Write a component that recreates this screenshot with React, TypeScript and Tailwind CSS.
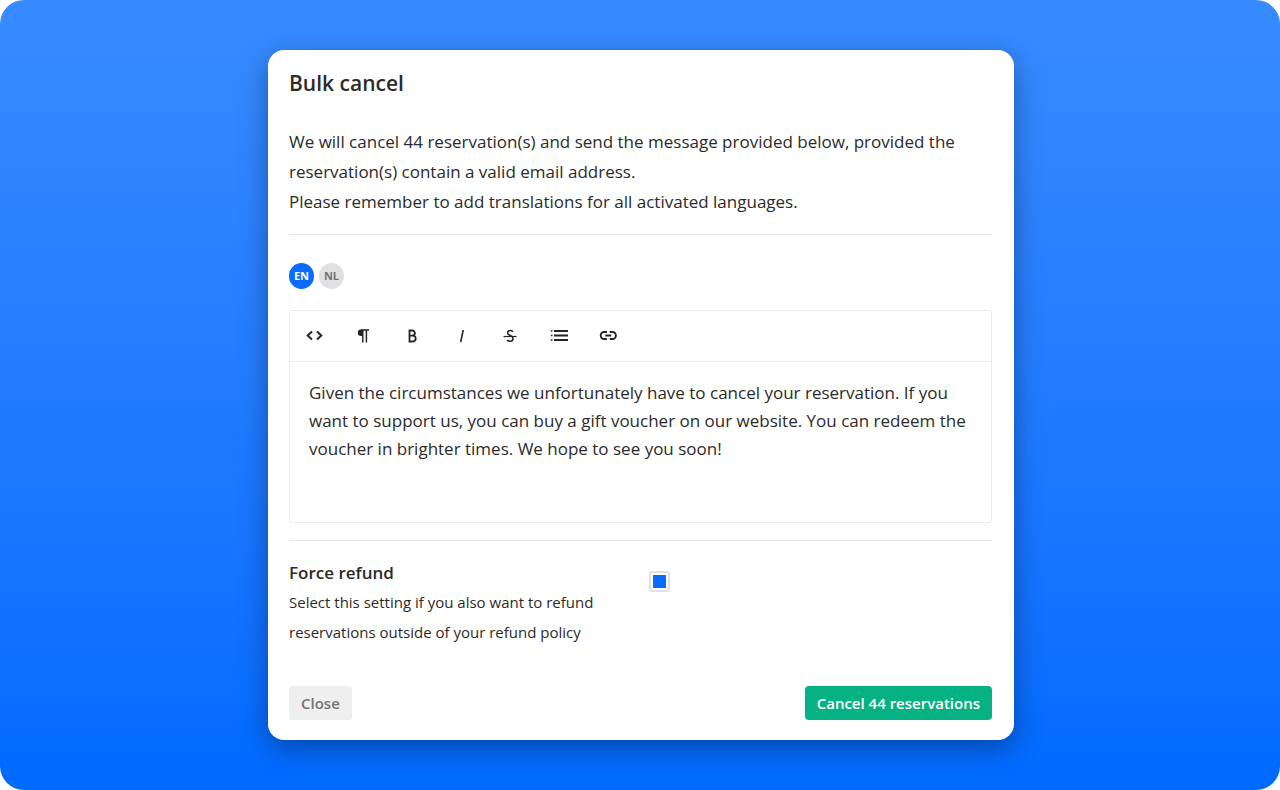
import { useState, type ReactNode } from "react";

const languages = ["EN", "NL"];

const messages: Record<string, string> = {
  EN: "Given the circumstances we unfortunately have to cancel your reservation. If you want to support us, you can buy a gift voucher on our website. You can redeem the voucher in brighter times. We hope to see you soon!",
  NL: "",
};

const tools: { label: string; icon: ReactNode }[] = [
  {
    label: "HTML",
    icon: <path d="M8 6.5 3.7 10.500 8 14.500M13 6.500l4.300 4-4.300 4" strokeWidth="2" />,
  },
  {
    label: "Format",
    icon: (
      <>
        <path
          d="M9.5 4.500H8a3.200 3.200 0 0 0 0 6.400h1.500z"
          fill="currentColor"
          stroke="none"
        />
        <path d="M8 5h8M9.800 4.500v13M13.400 4.500v13" strokeWidth="1.5" />
      </>
    ),
  },
  {
    label: "Bold",
    icon: (
      <path
        d="M7.5 5.500v11h3.300a2.900 2.900 0 0 0 0-5.800H7.500h2.800a2.600 2.600 0 0 0 0-5.200z"
        strokeWidth="1.8"
      />
    ),
  },
  { label: "Italic", icon: <path d="M12.2 5 9.700 17" strokeWidth="1.6" /> },
  {
    label: "Strikethrough",
    icon: (
      <>
        <path
          d="M13 6.700C12.300 5.900 11.400 5.500 10.200 5.500 8.600 5.500 7.600 6.400 7.600 7.800c0 3.400 5.400 2.200 5.400 5.700 0 1.700-1.200 2.800-2.900 2.800-1.300 0-2.300-.5-3-1.400"
          strokeWidth="1.6"
        />
        <path d="M3.5 11.500h13" strokeWidth="1.2" />
      </>
    ),
  },
  {
    label: "List",
    icon: (
      <>
        <path d="M5 6h14M5 10.500h14M5 15h14" strokeWidth="2" />
        <path d="M1.800 6h1.700M1.800 10.500h1.700M1.800 15h1.700" strokeWidth="1.6" />
      </>
    ),
  },
  {
    label: "Link",
    icon: (
      <path
        d="M8.900 7H6.200a3.500 3.500 0 0 0 0 7h2.700M11.700 7h2.700a3.500 3.500 0 0 1 0 7h-2.700M7.300 10.500h6"
        strokeWidth="1.9"
      />
    ),
  },
];

function EditorToolbar() {
  return (
    <div className="flex h-[51px] items-center border-b border-[#ebebeb]">
      {tools.map((tool) => (
        <button
          key={tool.label}
          type="button"
          aria-label={tool.label}
          className="flex h-full w-[49px] items-center justify-center pr-0.5 pb-0.5 text-[#252525]"
        >
          <svg
            width="20"
            height="20"
            viewBox="0 0 20 20"
            fill="none"
            stroke="currentColor"
          >
            {tool.icon}
          </svg>
        </button>
      ))}
    </div>
  );
}

export default function App() {
  const [language, setLanguage] = useState("EN");
  const [drafts, setDrafts] = useState(messages);
  const [forceRefund, setForceRefund] = useState(true);

  return (
    <main className="min-h-screen rounded-3xl bg-linear-to-b from-[#388bff] to-[#006aff] py-[50px] pr-4 pl-[18px] font-['Open_Sans',sans-serif] text-[#2b2b2b]">
      <section
        role="dialog"
        aria-labelledby="dialog-title"
        className="mx-auto max-w-[746px] rounded-2xl bg-white pt-[15px] pr-[22px] pb-5 pl-[21px] shadow-[0_8px_28px_rgba(0,0,0,0.35)]"
      >
        <h1 id="dialog-title" className="text-[21px] leading-9 font-semibold">
          Bulk cancel
        </h1>

        <div className="mt-[26px] border-b border-[#e6e6e6] pb-[17px] text-[17px] leading-[30px]">
          <p>
            We will cancel 44 reservation(s) and send the message provided
            below, provided the reservation(s) contain a valid email address.
          </p>
          <p>Please remember to add translations for all activated languages.</p>
        </div>

        <div className="mt-7 flex gap-[5px]">
          {languages.map((code) => (
            <button
              key={code}
              type="button"
              aria-pressed={language === code}
              onClick={() => setLanguage(code)}
              className={`flex h-[26px] w-[25px] items-center justify-center rounded-full text-[11px] font-bold ${
                language === code
                  ? "bg-[#0a6cff] text-white"
                  : "bg-[#e1e1e1] text-[#757575]"
              }`}
            >
              {code}
            </button>
          ))}
        </div>

        <div className="mt-[21px] rounded-[3px] border border-[#ebebeb]">
          <EditorToolbar />
          <textarea
            aria-label="Message"
            rows={5}
            value={drafts[language]}
            onChange={(event) =>
              setDrafts({ ...drafts, [language]: event.target.value })
            }
            className="block h-40 w-full resize-none px-[19px] py-[17px] text-[17px] leading-7 outline-none"
          />
        </div>

        <div className="mt-[17px] flex gap-10 border-t border-[#e6e6e6] pt-[18px]">
          <label htmlFor="force-refund" className="w-80">
            <span className="block text-[17px] leading-7 font-semibold">
              Force refund
            </span>
            <span className="block text-[15px] leading-[30px]">
              Select this setting if you also want to refund reservations
              outside of your refund policy
            </span>
          </label>
          <input
            id="force-refund"
            type="checkbox"
            checked={forceRefund}
            onChange={(event) => setForceRefund(event.target.checked)}
            className="mt-3 size-[21px] appearance-none rounded-[3px] border-2 border-[#e1e1e1] bg-white bg-clip-content p-[2px] checked:bg-[#0a6cff]"
          />
        </div>

        <div className="mt-[39px] flex items-center justify-between text-[15px] font-semibold">
          <button
            type="button"
            className="h-[34px] rounded bg-[#efefef] px-3 text-[#757575]"
          >
            Close
          </button>
          <button
            type="button"
            className="h-[34px] rounded bg-[#06b283] px-3 text-white"
          >
            Cancel 44 reservations
          </button>
        </div>
      </section>
    </main>
  );
}
